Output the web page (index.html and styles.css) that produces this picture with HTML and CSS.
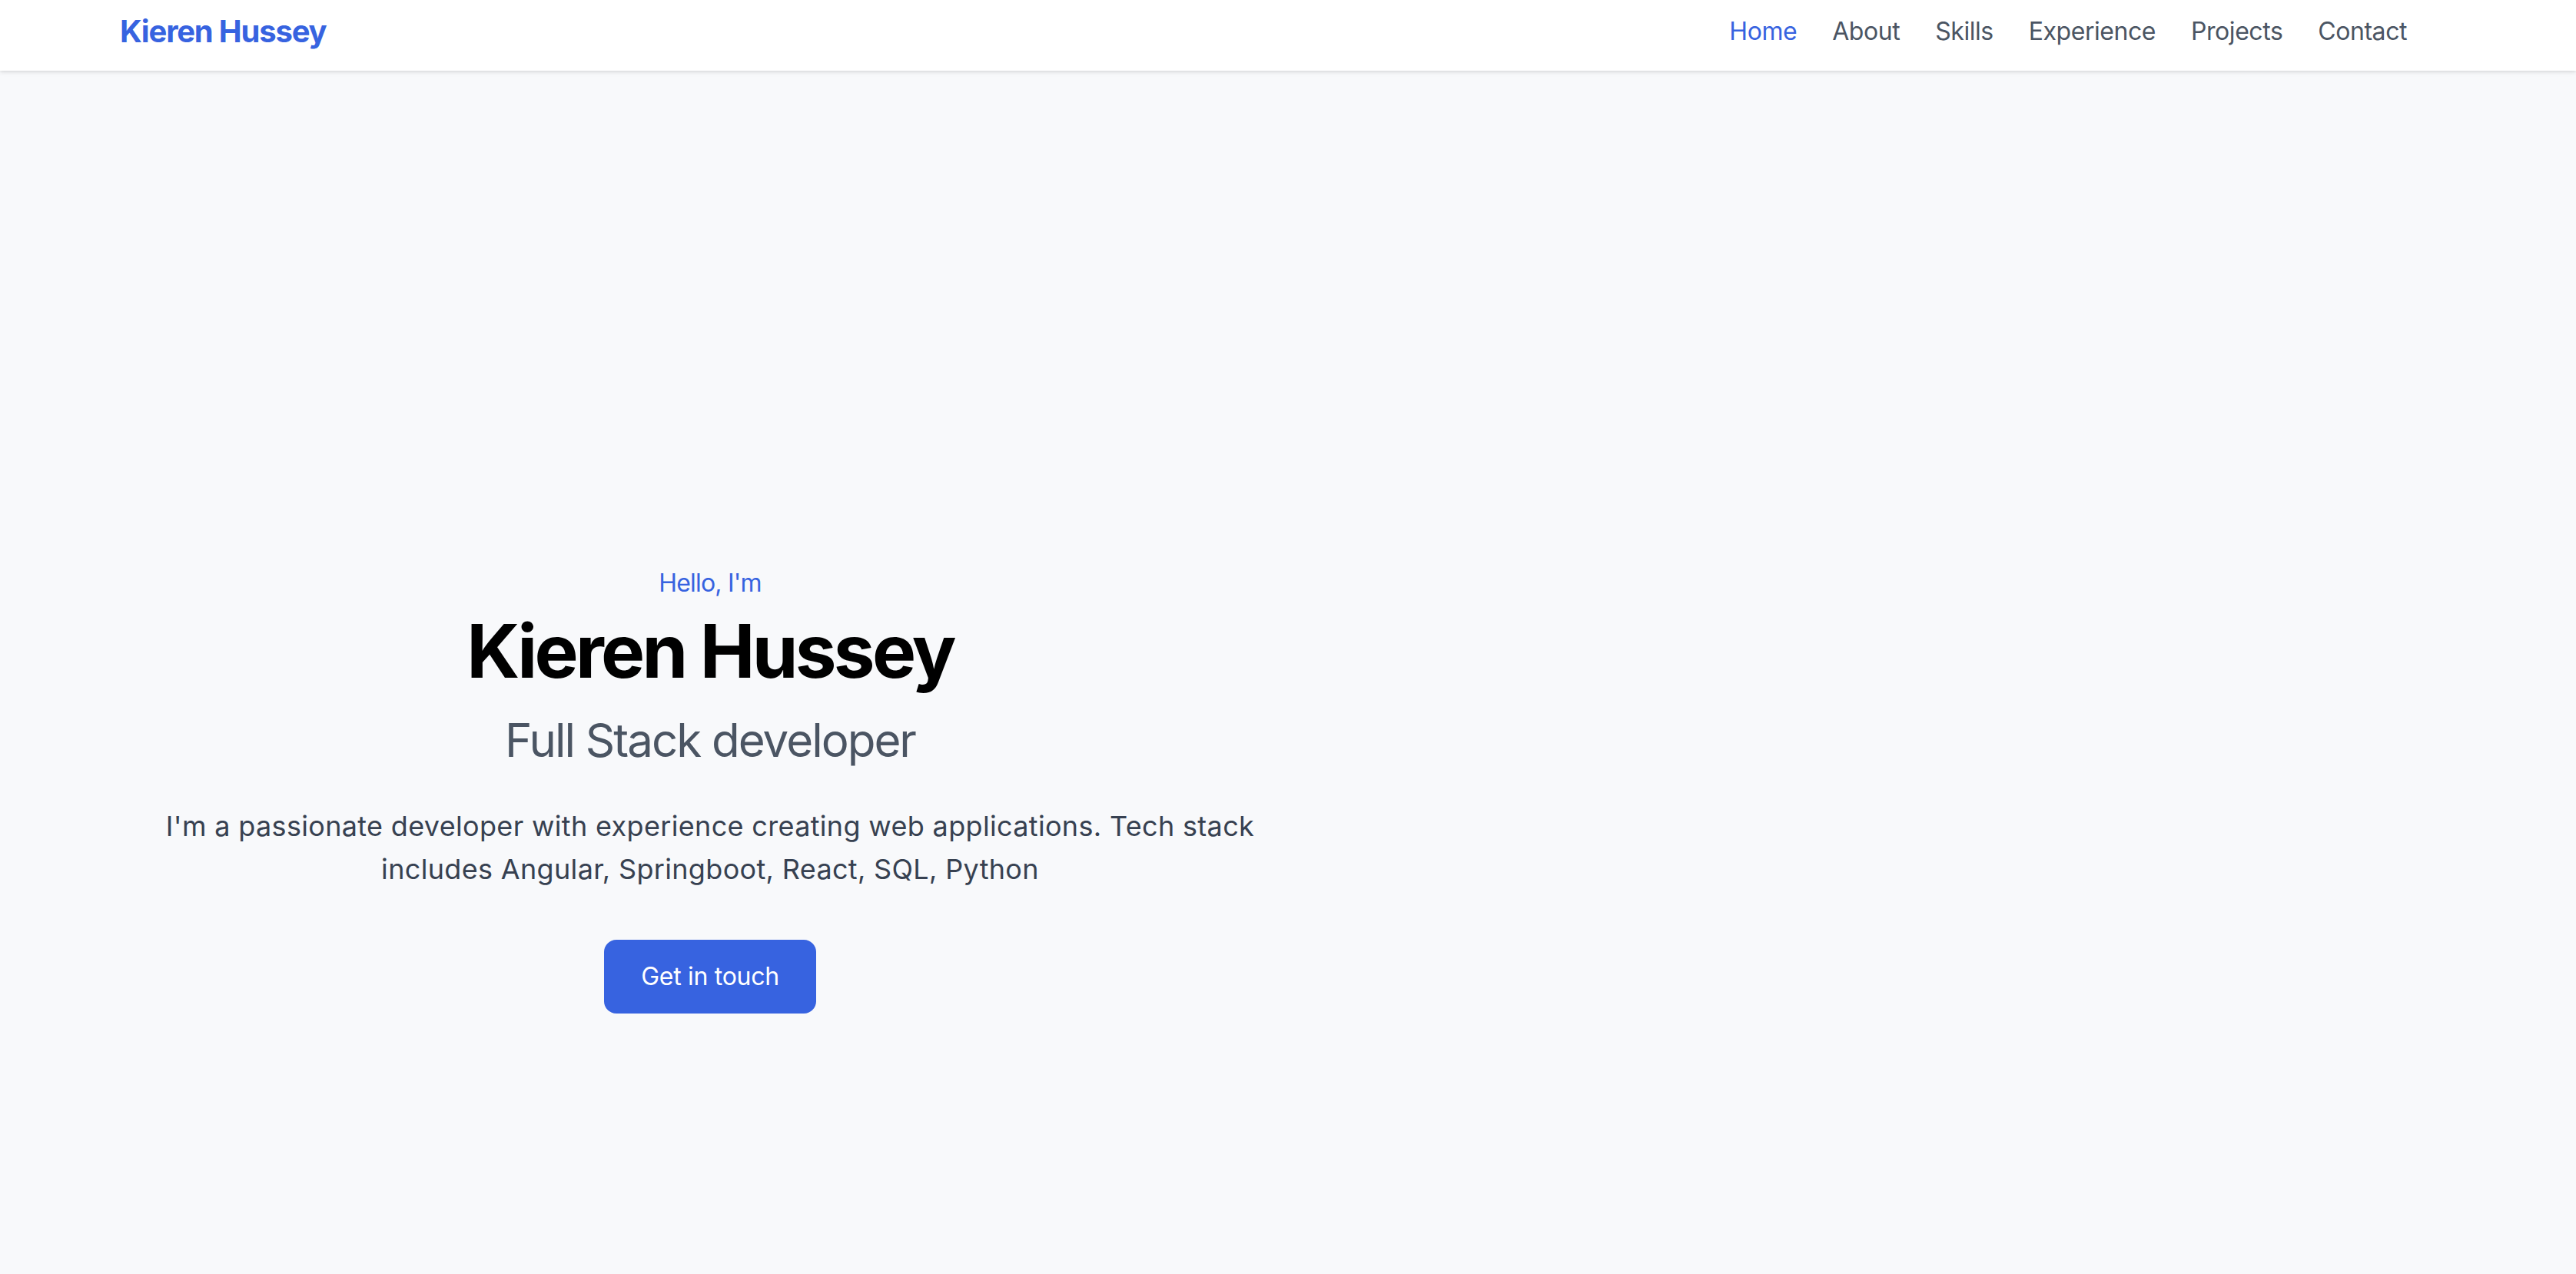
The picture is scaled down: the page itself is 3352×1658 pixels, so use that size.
FILE: index.html
```html
<!DOCTYPE html>
<html lang="en">
<head>
<meta charset="utf-8">
<title>Kieren Hussey</title>
<link rel="stylesheet" href="styles.css">
</head>
<body>
<header class="site-header">
  <div class="container header-inner">
    <a class="logo" href="#">Kieren Hussey</a>
    <nav class="nav">
      <a class="nav-link active" href="#">Home</a>
      <a class="nav-link" href="#">About</a>
      <a class="nav-link" href="#">Skills</a>
      <a class="nav-link" href="#">Experience</a>
      <a class="nav-link" href="#">Projects</a>
      <a class="nav-link" href="#">Contact</a>
    </nav>
  </div>
</header>
<main class="hero">
  <div class="container hero-grid">
    <div class="hero-text">
      <p class="hello">Hello, I'm</p>
      <h1 class="name">Kieren Hussey</h1>
      <h2 class="role">Full Stack developer</h2>
      <p class="intro">I'm a passionate developer with experience creating web applications. Tech stack includes Angular, Springboot, React, SQL, Python</p>
      <a class="btn" href="#">Get in touch</a>
    </div>
    <div class="hero-side"></div>
  </div>
</main>
</body>
</html>
```
FILE: styles.css
```css
* { box-sizing: border-box; }
html, body { margin: 0; padding: 0; }
body {
  font-family: Inter, "Noto Sans", "Liberation Sans", sans-serif;
  background: #f8f9fb;
  color: #111827;
  min-height: 1658px;
}
a { text-decoration: none; }
.container {
  max-width: 3072px;
  margin: 0 auto;
}
.site-header {
  background: #ffffff;
  height: 92px;
  box-shadow: 0 2px 6px rgba(0,0,0,0.10), 0 1px 3px rgba(0,0,0,0.06);
  position: relative;
  z-index: 2;
}
.header-inner {
  height: 92px;
  display: flex;
  align-items: center;
  justify-content: space-between;
  padding: 0 80px 10px 16px;
}
.logo {
  font-size: 40px;
  line-height: 56px;
  font-weight: 700;
  color: #3763e0;
  letter-spacing: -1.2px;
}
.nav {
  display: flex;
  gap: 46px;
}
.nav-link {
  font-size: 32px;
  line-height: 48px;
  color: #4b5563;
  letter-spacing: -0.45px;
}
.nav-link.active { color: #3763e0; }
.hero {
  padding-top: 643px;
}
.hero-grid {
  display: grid;
  grid-template-columns: 1fr 1fr;
  gap: 64px;
  padding: 0 64px;
}
.hero-text {
  text-align: center;
  display: flex;
  flex-direction: column;
  align-items: center;
}
.hello {
  margin: 0 0 16px;
  font-size: 32px;
  line-height: 48px;
  color: #3763e0;
  letter-spacing: -0.8px;
}
.name {
  margin: 0;
  font-size: 96px;
  line-height: 96px;
  font-weight: 700;
  color: #000000;
  letter-spacing: -3.7px;
}
.role {
  margin: 32px 0 48px;
  font-size: 60px;
  line-height: 72px;
  font-weight: 400;
  color: #4b5563;
  letter-spacing: -2px;
}
.intro {
  margin: 0;
  font-size: 36px;
  line-height: 56px;
  color: #374151;
  letter-spacing: 0.33px;
}
.btn {
  margin-top: 64px;
  display: inline-block;
  background: #3763e0;
  color: #ffffff;
  font-size: 32px;
  line-height: 48px;
  padding: 24px 48px;
  border-radius: 16px;
  letter-spacing: -0.3px;
}
```
